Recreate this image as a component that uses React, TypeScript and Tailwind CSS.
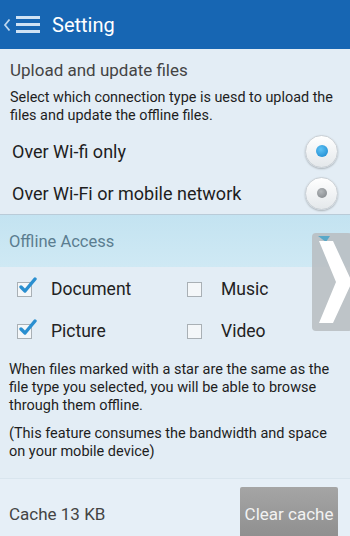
import React from "react";

function Radio({ on }: { on: boolean }) {
  return (
    <div className="flex h-[33px] w-[33px] items-center justify-center rounded-full border border-[#c9cfd4] bg-gradient-to-b from-white to-[#e4e8eb] shadow-[0_1px_2px_rgba(0,0,0,0.25)]">
      {on ? (
        <div className="h-[12px] w-[12px] rounded-full bg-[radial-gradient(circle_at_40%_35%,#5fc3f5,#1683cc)]" />
      ) : (
        <div className="h-[10px] w-[10px] rounded-full bg-[radial-gradient(circle_at_40%_35%,#b4b8bb,#7d8286)]" />
      )}
    </div>
  );
}

function Check({ on, label }: { on: boolean; label: string }) {
  return (
    <div className="flex h-[24px] items-center">
      <div className="relative ml-[17px] h-[15px] w-[15px] border border-[#a9b0b5] bg-[#f4f7f9]">
        {on && (
          <svg className="absolute -top-[6px] left-[1px]" width="18" height="18" viewBox="0 0 18 18">
            <path d="M2 10 L6 14 L16 2" fill="none" stroke="#2a8fd0" strokeWidth="3.4" strokeLinecap="round" strokeLinejoin="round" />
          </svg>
        )}
      </div>
      <span className="ml-[19px] text-[17.5px] text-[#222]">{label}</span>
    </div>
  );
}

export default function App() {
  return (
    <div className="relative h-[536px] w-[350px] overflow-hidden bg-[#e3edf5] font-['Roboto',sans-serif]">
      <header className="flex h-[49px] items-center bg-[#1766b3] text-white">
        <svg className="ml-[3px]" width="8" height="14" viewBox="0 0 8 14">
          <path d="M6.5 1.5 L2 7 L6.5 12.5" fill="none" stroke="#bcd6ee" strokeWidth="1.8" />
        </svg>
        <div className="ml-[5px] flex w-[24px] flex-col gap-[4px]">
          <div className="h-[3px] bg-[#cfe2f4]" />
          <div className="h-[3px] bg-[#cfe2f4]" />
          <div className="h-[3px] bg-[#cfe2f4]" />
        </div>
        <span className="ml-[12px] text-[20px]">Setting</span>
      </header>

      <div className="px-[10px] pt-[10px]">
        <div className="text-[17px] leading-[22px] text-[#444]">Upload and update files</div>
        <p className="mt-[8px] text-[14.4px] leading-[18px] text-[#1e1e1e]">
          Select which connection type is uesd to upload the files and update the offline files.
        </p>
      </div>

      <div className="mt-[5px] flex h-[42px] items-center justify-between px-[12px]">
        <span className="text-[18px] text-[#1e1e1e]">Over Wi-fi only</span>
        <Radio on />
      </div>
      <div className="flex h-[42px] items-center justify-between px-[12px]">
        <span className="text-[18px] text-[#1e1e1e]">Over Wi-Fi or mobile network</span>
        <Radio on={false} />
      </div>

      <div className="border-t border-[#b9cbd8]" />
      <div className="flex h-[52px] items-center bg-gradient-to-b from-[#c3e3f1] to-[#cfe9f4] pl-[9px] pt-[3px] text-[16.5px] text-[#5b7d90]">
        Offline Access
      </div>

      <div className="grid grid-cols-[170px_1fr] gap-y-[18px] pt-[10px]">
        <Check on label="Document" />
        <Check on={false} label="Music" />
        <Check on label="Picture" />
        <Check on={false} label="Video" />
      </div>

      <div className="px-[9px] pt-[18px] text-[14.5px] leading-[18px] text-[#1e1e1e]">
        <p>When files marked with a star are the same as the file type you selected, you will be able to browse through them offline.</p>
        <p className="mt-[10px]">(This feature consumes the bandwidth and space on your mobile device)</p>
      </div>

      <div className="mt-[17px] flex h-[62px] items-end justify-between border-t border-[#d9e5ee] bg-[#e6eff7] pl-[9px] pr-[12px]">
        <span className="mb-[13px] text-[17px] text-[#444]">Cache 13 KB</span>
        <button className="h-[53px] w-[98px] rounded-t-[2px] bg-gradient-to-b from-[#a5a5a5] to-[#8e8e8e] pt-[2px] text-[17px] text-[#f2f2f2]">
          Clear cache
        </button>
      </div>

      <div className="absolute left-[312px] top-[233px] h-[98px] w-[40px] rounded-[4px] bg-[#b9bfc3]/90">
        <svg className="absolute left-0 top-0" width="40" height="98" viewBox="0 0 40 98">
          <path d="M6 3 L18 3 L14 9 Z" fill="#5aa8c8" />
          <path d="M7 8 L21 8 L40 49 L21 90 L7 90 L24 49 Z" fill="#ffffff" />
        </svg>
      </div>
    </div>
  );
}
